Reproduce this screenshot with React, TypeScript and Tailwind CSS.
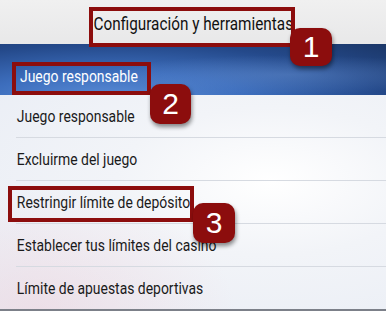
import React from "react";

const font = { fontFamily: 'Roboto, "Liberation Sans", sans-serif' };

function Badge({ n, className }: { n: string; className: string }) {
  return (
    <div
      className={`absolute flex items-center justify-center rounded-[10px] bg-[#8c0d0d] text-white text-[30px] leading-none shadow-[1px_3px_4px_rgba(0,0,0,0.45)] ${className}`}
      style={{ fontFamily: '"Liberation Sans", Arial, sans-serif' }}
    >
      {n}
    </div>
  );
}

const items = [
  "Juego responsable",
  "Excluirme del juego",
  "Restringir límite de depósito",
  "Establecer tus límites del casino",
  "Límite de apuestas deportivas",
];

export default function App() {
  return (
    <div className="relative w-[386px] h-[311px] overflow-hidden bg-[#eef1f7]" style={font}>
      <div className="h-[44px] flex items-center justify-center bg-gradient-to-b from-[#f0f0f0] to-[#e8e8e9] text-[#111] text-[18px] pt-[2px]">
        <span className="inline-block scale-x-[0.85]">Configuración y herramientas</span>
      </div>
      <div className="relative h-[51px] flex items-center pl-[20px] pt-[14px] text-white text-[16px] bg-[radial-gradient(ellipse_at_30%_110%,#5d8fd8_0%,#3d6ebd_35%,#24498a_70%,#1b3768_100%)]">
        <div className="absolute inset-0 bg-[radial-gradient(ellipse_at_75%_60%,rgba(120,160,220,0.35)_0%,rgba(0,0,0,0)_45%)]" />
        <span className="relative inline-block origin-left scale-x-[0.87]">Juego responsable</span>
      </div>
      <div className="relative bg-[radial-gradient(ellipse_at_70%_40%,#ffffff_0%,#f2f4f8_40%,#e9edf5_100%)]">
        <div className="absolute inset-0 bg-[radial-gradient(ellipse_at_10%_100%,rgba(240,200,210,0.4)_0%,rgba(0,0,0,0)_40%)]" />
        {items.map((t, i) => (
          <div
            key={t}
            className={`relative ml-[16px] flex items-center text-[16px] text-[#1a1a1a] pt-[2px] ${i < items.length - 1 ? "h-[43px] border-b border-[#d6dae1]" : "h-[42px]"}`}
          >
            <span className="inline-block origin-left scale-x-[0.87] pl-[1px]">{t}</span>
          </div>
        ))}
        <div className="relative h-[2px] bg-[#7c8089]" />
      </div>

      <div className="absolute left-[89px] top-[7px] w-[206px] h-[40px] border-[4px] border-[#8c0d0d]" />
      <Badge n="1" className="left-[290px] top-[28px] w-[42px] h-[38px]" />

      <div className="absolute left-[12px] top-[62px] w-[139px] h-[33px] border-[4px] border-[#8c0d0d]" />
      <Badge n="2" className="left-[150px] top-[84px] w-[41px] h-[40px]" />

      <div className="absolute left-[8px] top-[186px] w-[186px] h-[36px] border-[4px] border-[#8c0d0d]" />
      <Badge n="3" className="left-[193px] top-[203px] w-[42px] h-[40px]" />
    </div>
  );
}
